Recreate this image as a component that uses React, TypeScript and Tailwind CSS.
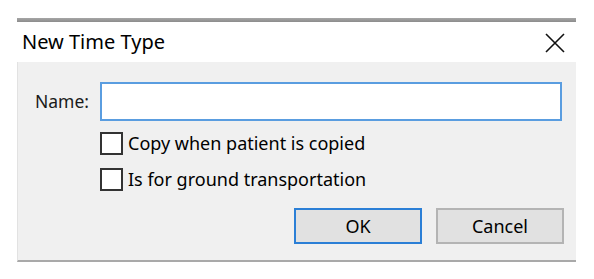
import React from 'react';

const font = { fontFamily: '"Noto Sans", "Open Sans", sans-serif' };

function CheckRow({ label }: { label: string }) {
  return (
    <label className="flex items-center gap-[5px] h-[22px]">
      <span className="w-[23px] h-[23px] border-2 border-[#333333] bg-white shrink-0" />
      <span className="text-[18px] text-black leading-none">{label}</span>
    </label>
  );
}

export default function App() {
  return (
    <div className="w-[594px] h-[279px] bg-white pt-[18px] pl-[17px]" style={font}>
      <div className="w-[559px]">
        <div className="h-[4px] bg-gradient-to-b from-[#a6a6a6] to-[#8c8c8c]" />
        <div className="h-[40px] bg-white flex items-center justify-between pl-[5px] pr-[11px]">
          <span className="text-[20px] text-black leading-none">New Time Type</span>
          <svg width="20" height="20" viewBox="0 0 20 20" className="mt-[1px]">
            <path d="M1 1 L19 19 M19 1 L1 19" stroke="#111" strokeWidth="1.6" fill="none" />
          </svg>
        </div>
        <div className="h-[200px] bg-[#f0f0f0] border-l border-[#e2e2e2] border-b-2 border-b-[#a9a9a9] pt-[20px] pr-[14px]">
          <div className="flex items-center">
            <span className="w-[82px] pl-[17px] text-[17.5px] text-[#1a1a1a]">Name:</span>
            <input className="flex-1 h-[39px] bg-white border-2 border-[#5a9de0] outline-none px-2" />
          </div>
          <div className="pl-[82px] mt-[11px] flex flex-col gap-[14px]">
            <CheckRow label="Copy when patient is copied" />
            <CheckRow label="Is for ground transportation" />
          </div>
          <div className="flex justify-end gap-[14px] mt-[18px]">
            <button className="w-[128px] h-[36px] bg-[#e1e1e1] border-2 border-[#2b7fd6] text-[18px] text-black">OK</button>
            <button className="w-[128px] h-[36px] bg-[#e1e1e1] border-2 border-[#b4b4b4] text-[18px] text-black mr-[-2px]">Cancel</button>
          </div>
        </div>
      </div>
    </div>
  );
}
